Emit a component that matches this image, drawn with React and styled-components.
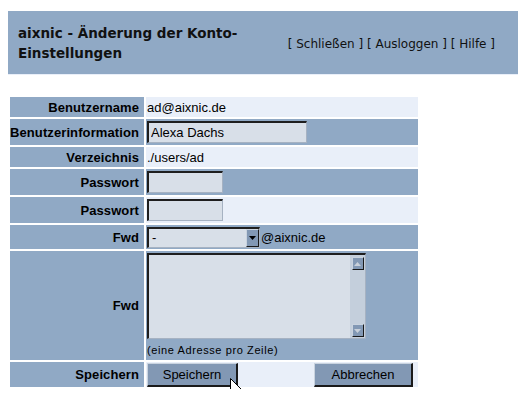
import React from 'react';
import styled, { createGlobalStyle } from 'styled-components';

const DARK = '#90a9c5';
const LIGHT = '#e9eff9';
const FIELD = '#d8dfe8';
const BTN = '#8298b4';

const GlobalStyle = createGlobalStyle`
  html, body { padding: 0; background: #fff; }
  body { margin: 8px; font-family: "Liberation Sans", Arial, sans-serif; color: #000; }
`;

const Page = styled.div`
  position: relative;
  padding-top: 3px;
`;

const Header = styled.header`
  margin-right: 2px;
  height: 63px;
  background: ${DARK};
  border-bottom: 1px solid ${LIGHT};
  display: flex;
  align-items: center;
  justify-content: space-between;
  padding: 0 23px 0 10px;
`;

const Title = styled.h1`
  margin: 0;
  width: 236px;
  font-family: "DejaVu Sans", Verdana, sans-serif;
  font-weight: bold;
  font-size: 13.5px;
  line-height: 20px;
  color: #111;
`;

const Links = styled.nav`
  font-family: "DejaVu Sans", Verdana, sans-serif;
  font-size: 12px;
  color: #111;
  white-space: pre;
  padding-top: 2px;
`;

const Form = styled.div`
  margin-top: 20px;
  display: grid;
  grid-template-columns: 134px 272px;
  grid-template-rows: 20px 26px 20px 26px 26px 24px 109px 25px;
  gap: 2px;
  padding: 2px;
  width: max-content;
`;

const Label = styled.div`
  background: ${DARK};
  display: flex;
  align-items: center;
  justify-content: flex-end;
  padding-right: 5px;
  font-weight: bold;
  font-size: 13px;
  letter-spacing: 0.1px;
`;

const Value = styled.div`
  background: ${p => (p.$tone === 'dark' ? DARK : LIGHT)};
  display: flex;
  align-items: center;
  padding-left: 1px;
  font-size: 13px;
`;

const StackValue = styled(Value)`
  flex-direction: column;
  align-items: flex-start;
  padding-top: 2px;
`;

const ButtonValue = styled(Value)`
  align-items: flex-start;
  justify-content: space-between;
  padding: 1px 5px 0 1px;
`;

const sunken = `
  box-sizing: border-box;
  background: ${FIELD};
  border-style: solid;
  border-width: 2px 1px 1px 2px;
  border-color: #1e1e1e #a6b2c2 #a6b2c2 #1e1e1e;
`;

const TextInput = styled.input`
  ${sunken}
  width: ${p => p.$w}px;
  height: ${p => p.$h}px;
  padding: 0 2px;
  font-family: "Liberation Sans", Arial, sans-serif;
  font-size: 13px;
  color: #000;
  outline: none;
`;

const SelectBox = styled.div`
  ${sunken}
  width: 113px;
  height: 21px;
  display: flex;
  align-items: stretch;
`;

const SelectText = styled.span`
  flex: 1;
  padding-left: 3px;
  line-height: 17px;
  font-size: 13px;
`;

const raised = `
  box-sizing: border-box;
  background: ${BTN};
  border-style: solid;
  border-width: 1px;
  border-color: #c9d3df #1a1a1a #1a1a1a #c9d3df;
`;

const SelectArrow = styled.span`
  ${raised}
  width: 13px;
  display: flex;
  align-items: center;
  justify-content: center;
`;

const Suffix = styled.span`
  margin-left: 1px;
  font-size: 13px;
`;

const TextAreaBox = styled.div`
  ${sunken}
  width: 219px;
  height: 86px;
  display: flex;
`;

const Area = styled.textarea`
  flex: 1;
  border: none;
  background: ${FIELD};
  resize: none;
  padding: 2px;
  outline: none;
  font-family: "Liberation Sans", Arial, sans-serif;
  font-size: 13px;
`;

const ScrollTrack = styled.div`
  width: 15px;
  background: #c4cfdc;
  display: flex;
  flex-direction: column;
  justify-content: space-between;
  align-items: center;
  padding: 2px 0 1px;
  box-sizing: border-box;
`;

const ScrollBtn = styled.span`
  ${raised}
  width: 12px;
  height: 13px;
  display: flex;
  align-items: center;
  justify-content: center;
`;

const Note = styled.div`
  margin-top: 4px;
  font-size: 11px;
  line-height: 15px;
  letter-spacing: 0.6px;
`;

const Button = styled.button`
  ${raised}
  border-width: 1px 2px 2px 1px;
  width: ${p => p.$w}px;
  height: 24px;
  padding: 0;
  font-family: "Liberation Sans", Arial, sans-serif;
  font-size: 13px;
  color: #000;
`;

const Cursor = styled.svg`
  position: absolute;
  left: 222px;
  top: 370px;
  z-index: 10;
  display: block;
  overflow: visible;
  pointer-events: none;
`;

const Tri = ({ up, color }) => (
  <svg width="7" height="4" viewBox="0 0 7 4">
    <path d={up ? 'M0 4 L3.5 0 L7 4 Z' : 'M0 0 L7 0 L3.5 4 Z'} fill={color} />
  </svg>
);

export default function App() {
  return (
    <Page>
      <GlobalStyle />
      <Header>
        <Title>aixnic - Änderung der Konto-Einstellungen</Title>
        <Links>[ Schließen ] [ Ausloggen ] [ Hilfe ]</Links>
      </Header>
      <Form>
        <Label>Benutzername</Label>
        <Value>ad@aixnic.de</Value>

        <Label>Benutzerinformation</Label>
        <Value $tone="dark">
          <TextInput $w={160} $h={22} defaultValue="Alexa Dachs" />
        </Value>

        <Label>Verzeichnis</Label>
        <Value>./users/ad</Value>

        <Label>Passwort</Label>
        <Value $tone="dark">
          <TextInput type="password" $w={76} $h={22} />
        </Value>

        <Label>Passwort</Label>
        <Value>
          <TextInput type="password" $w={76} $h={22} />
        </Value>

        <Label>Fwd</Label>
        <Value $tone="dark">
          <SelectBox>
            <SelectText>-</SelectText>
            <SelectArrow>
              <Tri color="#000" />
            </SelectArrow>
          </SelectBox>
          <Suffix>@aixnic.de</Suffix>
        </Value>

        <Label>Fwd</Label>
        <StackValue $tone="dark">
          <TextAreaBox>
            <Area />
            <ScrollTrack>
              <ScrollBtn>
                <Tri up color="#c8d0da" />
              </ScrollBtn>
              <ScrollBtn>
                <Tri color="#c8d0da" />
              </ScrollBtn>
            </ScrollTrack>
          </TextAreaBox>
          <Note>(eine Adresse pro Zeile)</Note>
        </StackValue>

        <Label>Speichern</Label>
        <ButtonValue>
          <Button $w={91}>Speichern</Button>
          <Button $w={99}>Abbrechen</Button>
        </ButtonValue>
      </Form>
      <Cursor width="13" height="21" viewBox="0 0 13 21">
        <path
          d="M0.5 0.5 L0.5 16.5 L4.5 12.5 L7.5 19.5 L9.5 18.5 L6.5 11.5 L11.5 11.5 Z"
          fill="#ffffff"
          stroke="#000000"
          strokeWidth="1"
          strokeLinejoin="miter"
        />
      </Cursor>
    </Page>
  );
}
